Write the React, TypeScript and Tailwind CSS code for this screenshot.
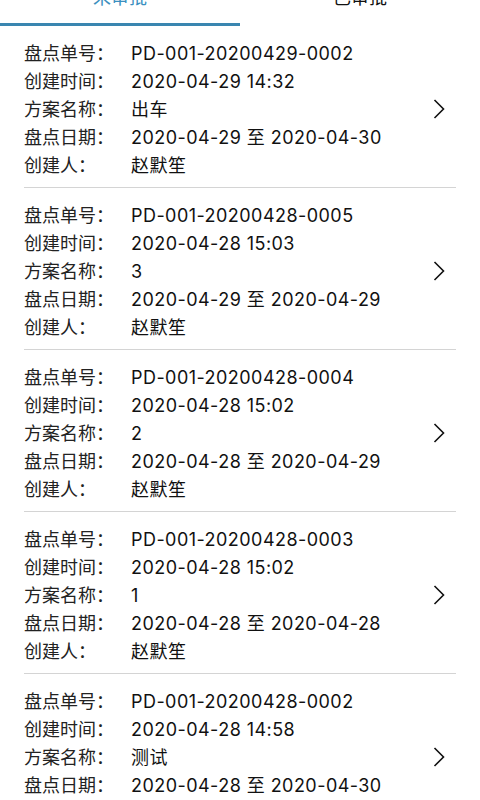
interface Record {
  no: string;
  created: string;
  plan: string;
  range: string;
  creator: string;
}

const records: Record[] = [
  { no: 'PD-001-20200429-0002', created: '2020-04-29 14:32', plan: '出车', range: '2020-04-29 至 2020-04-30', creator: '赵默笙' },
  { no: 'PD-001-20200428-0005', created: '2020-04-28 15:03', plan: '3', range: '2020-04-29 至 2020-04-29', creator: '赵默笙' },
  { no: 'PD-001-20200428-0004', created: '2020-04-28 15:02', plan: '2', range: '2020-04-28 至 2020-04-29', creator: '赵默笙' },
  { no: 'PD-001-20200428-0003', created: '2020-04-28 15:02', plan: '1', range: '2020-04-28 至 2020-04-28', creator: '赵默笙' },
  { no: 'PD-001-20200428-0002', created: '2020-04-28 14:58', plan: '测试', range: '2020-04-28 至 2020-04-30', creator: '赵默笙' },
];

function Row({ label, value }: { label: string; value: string }) {
  return (
    <div className="flex h-[28px] items-center">
      <span className="w-[107px] shrink-0 text-[#222]">{label}</span>
      <span className="tracking-[0.45px] text-[#111]">{value}</span>
    </div>
  );
}

function Chevron() {
  return (
    <svg viewBox="0 0 12 20" className="mr-[11px] h-[20px] w-[12px]" fill="none">
      <polyline points="1.5,1 10.5,10 1.5,19" stroke="#111" strokeWidth="1.6" />
    </svg>
  );
}

function RecordCard({ r }: { r: Record }) {
  return (
    <div className="mx-6 flex items-center border-b border-[#d4d4d4] pt-[13px] pb-[8px]">
      <div className="flex-1">
        <Row label="盘点单号：" value={r.no} />
        <Row label="创建时间：" value={r.created} />
        <Row label="方案名称：" value={r.plan} />
        <Row label="盘点日期：" value={r.range} />
        <Row label="创建人：" value={r.creator} />
      </div>
      <Chevron />
    </div>
  );
}

export default function App() {
  return (
    <div
      className="-mt-[26px] min-h-screen bg-white text-[18px]"
      style={{ fontFamily: 'Inter, "Noto Sans CJK SC", sans-serif' }}
    >
      <div className="flex h-[52px]">
        <button className="flex flex-1 flex-col items-center justify-between pt-[12px]">
          <span className="leading-[24px] text-[#3a8fc0]">未审批</span>
          <span className="h-[3px] w-full bg-[#3a86b0]" />
        </button>
        <button className="flex flex-1 flex-col items-center pt-[12px]">
          <span className="leading-[24px] text-[#111]">已审批</span>
        </button>
      </div>
      {records.map(r => (
        <RecordCard key={r.no} r={r} />
      ))}
    </div>
  );
}
